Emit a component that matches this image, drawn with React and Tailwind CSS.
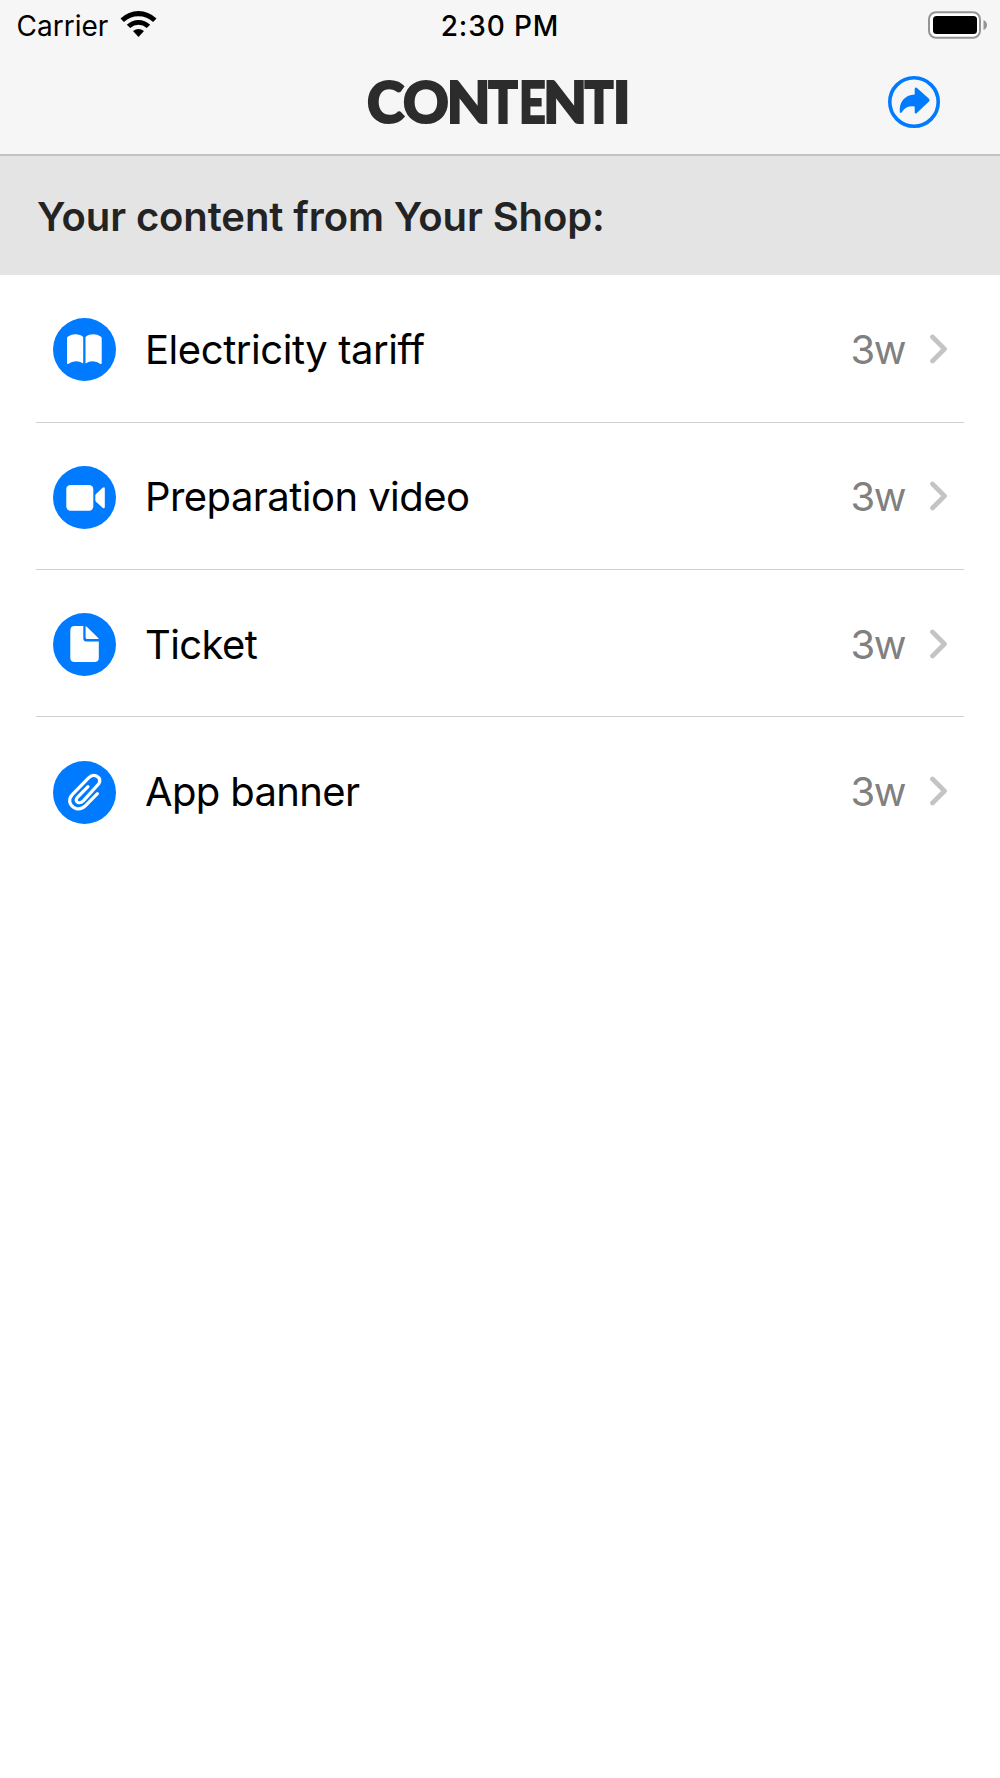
const blue = "#007aff";

function Book() {
  return (
    <path d="M14 20.4Q14 19.3 15 18.6Q18.5 16.3 22.2 16.3Q27.5 16.3 30.2 19V45.5Q27 43.2 22.8 43.2Q18.8 43.2 15.6 45.7Q14 46.3 14 45ZM48.7 20.4Q48.7 19.3 47.7 18.6Q44.2 16.3 40.5 16.3Q35.2 16.3 32.5 19V45.5Q35.7 43.2 39.9 43.2Q43.9 43.2 47.1 45.7Q48.7 46.3 48.7 45Z" fill="white" />
  );
}

function Video() {
  return (
    <g fill="white">
      <rect x="13.3" y="19" width="27" height="25.7" rx="4.2" />
      <path d="M42.3 29.6Q42.3 28.6 43 27.9L49.6 21.8Q51.7 20.4 51.8 22.6V41.1Q51.6 43.2 49.6 41.8L43 35.7Q42.3 35 42.3 34Z" />
    </g>
  );
}

function Document() {
  return (
    <g fill="white">
      <path d="M21.7 13H30.3V25.6Q30.3 28.4 33 28.4H45.8V44.7Q45.8 49 41.5 49H21.7Q17.3 49 17.3 44.7V17.4Q17.3 13 21.7 13Z" />
      <path d="M32.6 13.2Q33.4 13.3 34 13.9L45 24.8Q45.5 25.4 45.6 26H34Q32.6 26 32.6 24.6Z" />
    </g>
  );
}

function Clip() {
  return (
    <path d="M44.4 32.6L32.3 44.9Q28.5 48.6 23.3 47.6Q18.2 46.2 16.8 41.3Q16.1 36.9 19.3 33.6L35.6 16.8Q39.3 13.2 43.4 14.9Q48.6 18 45.8 22.8L30.6 39.6Q27.7 42.5 25 41.5Q21.8 39.8 24.2 36.6L35 25.6" fill="none" stroke="white" strokeWidth="3.2" strokeLinecap="round" strokeLinejoin="round" />
  );
}

const items = [
  { label: "Electricity tariff", Icon: Book, track: "tracking-[-0.44px]" },
  { label: "Preparation video", Icon: Video, track: "tracking-[-0.55px]" },
  { label: "Ticket", Icon: Document, track: "tracking-[-0.6px]" },
  { label: "App banner", Icon: Clip, track: "tracking-[-0.65px]" },
];

function Row({ label, Icon, track, last }) {
  return (
    <li className={`mx-9 flex h-[147.33px] items-center pl-[17px] pr-4 pt-[3px] ${last ? "" : "border-b border-[#cfcfd1]"}`}>
      <svg className="size-[63px] shrink-0" viewBox="0 0 63 63">
        <circle cx="31.5" cy="31.5" r="31.5" fill={blue} />
        <Icon />
      </svg>
      <span className={`ml-[29px] whitespace-nowrap text-[40px] leading-none text-black ${track}`}>{label}</span>
      <span className="ml-auto text-[40px] leading-none tracking-[-1.5px] text-[#808080]">3w</span>
      <svg className="mb-[2px] ml-[25px] h-[30px] w-[18px]" viewBox="0 0 18 30" fill="none" stroke="#c4c4c7" strokeWidth="4.7" strokeLinecap="round" strokeLinejoin="round">
        <path d="M2.5 3L14.5 15L2.5 27" />
      </svg>
    </li>
  );
}

const wordmark = [
  { char: "C", box: "w-[35px]", scale: "" },
  { char: "O", box: "ml-[0.3px] w-[45px]", scale: "" },
  { char: "N", box: "ml-[1.7px] w-[37px]", scale: "" },
  { char: "T", box: "ml-[1.3px] w-[29.5px]", scale: "scale-x-[0.865]" },
  { char: "E", box: "ml-[2.2px] w-[23.3px]", scale: "scale-x-[0.82]" },
  { char: "N", box: "ml-[3px] w-[37px]", scale: "" },
  { char: "T", box: "ml-[1.4px] w-[29px]", scale: "scale-x-[0.85]" },
  { char: "I", box: "ml-[2.3px] w-[10.6px]", scale: "scale-x-[1.04]" },
];

function Wordmark() {
  return (
    <h1 className="mb-[1px] mr-[5px] flex font-['Lato',sans-serif] text-[56.5px] font-black leading-none text-[#2c2c2c] [-webkit-text-stroke:2.1px_#2c2c2c]">
      {wordmark.map(({ char, box, scale }, i) => (
        <span key={i} className={`flex justify-center ${box}`}>
          <span className={scale}>{char}</span>
        </span>
      ))}
    </h1>
  );
}

export default function App() {
  return (
    <main className="min-h-[1778px] w-[1000px] bg-white font-['Inter',sans-serif]">
      <header className="h-[156px] border-b-2 border-[#c3c3c3] bg-[#f6f6f6]">
        <div className="grid h-[50px] grid-cols-3 items-center">
          <div className="flex items-center pl-[16.5px]">
            <span className="mt-[1px] text-[28px] leading-none">Carrier</span>
            <svg className="mb-[2px] ml-[11.5px] h-[28px] w-[37px]" viewBox="0 0 37 28">
              <path d="M0.5 8.5Q8.5 1 18.5 1T36.5 8.5L33 12Q27 6.3 18.5 6.3T4 12Z" />
              <path d="M6.8 14.7Q12 10 18.5 10T30.2 14.7L26.8 18Q23 14.8 18.5 14.8T10.2 18Z" />
              <path d="M13 21Q18.5 16.8 24 21L18.5 27Z" />
            </svg>
          </div>
          <span className="mt-[1px] text-center text-[28px] font-medium leading-none tracking-[0.9px]">2:30 PM</span>
          <svg className="mb-[1px] ml-auto mr-[13px] h-[28px] w-[59px]" viewBox="0 0 59 28">
            <rect x="1" y="1.2" width="51" height="25.6" rx="7" fill="white" stroke="#949494" strokeWidth="2" />
            <rect x="5" y="5" width="44" height="18" rx="3.5" />
            <path d="M55.5 9Q59 10.5 59 14T55.5 19Z" fill="#949494" />
          </svg>
        </div>
        <div className="grid h-[104px] grid-cols-[1fr_auto_1fr] items-center">
          <span />
          <Wordmark />
          <svg className="ml-auto mr-[60px] size-[52px]" viewBox="0 0 52 52">
            <circle cx="26" cy="26" r="24.2" fill="none" stroke={blue} strokeWidth="3.6" />
            <path d="M26.7 13Q26.8 10.8 28.7 11.8L41 22.8Q42.4 24.3 41 25.6L28.8 37Q26.9 38.3 26.7 36.3V30.5Q18 29.5 14.3 35.6Q13 38 11.8 36.3C11 26 16.5 19 26.7 18.5Z" fill={blue} />
          </svg>
        </div>
      </header>
      <section className="flex h-[119.3px] items-center bg-[#e4e4e4] pl-[37px] pt-[3px]">
        <h2 className="whitespace-nowrap text-[40px] font-semibold leading-none tracking-[-0.1px] text-[#232323]">Your content from Your Shop:</h2>
      </section>
      <ul>
        {items.map((item, i) => (
          <Row key={item.label} {...item} last={i === items.length - 1} />
        ))}
      </ul>
    </main>
  );
}
